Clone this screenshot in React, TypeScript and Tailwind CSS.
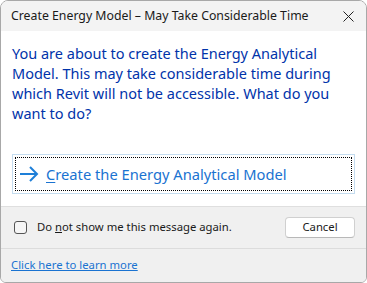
import React from 'react';

const font = { fontFamily: '"Noto Sans", "Open Sans", sans-serif' };

const Arrow = () => (
  <svg width="19" height="16" viewBox="0 0 19 16" fill="none">
    <path d="M0 8h17M10 1l7 7-7 7" stroke="#1e7fd8" strokeWidth="2" />
  </svg>
);

export default function App() {
  return (
    <div className="w-[367px] h-[283px] bg-white" style={font}>
      <div className="h-full flex flex-col border border-[#a8a8a8] rounded-t-[8px] rounded-b-[6px] overflow-hidden">
        {/* title bar */}
        <div className="h-[30px] shrink-0 flex items-center justify-between bg-[#f3f3f3] pl-[10px] pr-[12px]">
          <span className="text-[12.3px] text-[#1a1a1a]">Create Energy Model – May Take Considerable Time</span>
          <svg width="11" height="11" viewBox="0 0 11 11">
            <path d="M0.5 0.5l10 10M10.5 0.5l-10 10" stroke="#222" strokeWidth="1" />
          </svg>
        </div>

        {/* body */}
        <div className="flex-1 flex flex-col bg-white px-[11px] pt-[12px]">
          <p className="text-[14.5px] leading-[20px] text-[#0033aa] pr-[10px]">
            You are about to create the Energy Analytical Model. This may take considerable time during which Revit will not be accessible. What do you want to do?
          </p>
          <button className="mt-[31px] h-[40px] border border-[#c4dcef] p-[2px] text-left">
            <div className="h-full flex items-center gap-[7px] border border-dotted border-black pl-[4px]">
              <Arrow />
              <span className="text-[14.7px] text-[#1a73d1]">
                <span className="underline underline-offset-2">C</span>reate the Energy Analytical Model
              </span>
            </div>
          </button>
        </div>

        {/* footer */}
        <div className="shrink-0 bg-[#f0f0f0] border-t border-[#dfdfdf]">
          <div className="h-[41px] flex items-center justify-between pl-[13px] pr-[11px]">
            <label className="flex items-center gap-[10px] text-[11.3px] text-[#1a1a1a]">
              <span className="w-[13px] h-[13px] border border-[#555] rounded-[3px] bg-[#f6f6f6]" />
              <span>
                Do <span className="underline">n</span>ot show me this message again.
              </span>
            </label>
            <button className="w-[70px] h-[21px] bg-white border border-[#d0d0d0] border-b-[#b8b8b8] rounded-[4px] text-[11.3px] text-[#1a1a1a]">
              Cancel
            </button>
          </div>
          <div className="h-[34px] border-t border-[#dcdcdc] flex items-center pl-[10px]">
            <a href="#" className="text-[11.3px] text-[#1a73d1] underline">Click here to learn more</a>
          </div>
        </div>
      </div>
    </div>
  );
}
